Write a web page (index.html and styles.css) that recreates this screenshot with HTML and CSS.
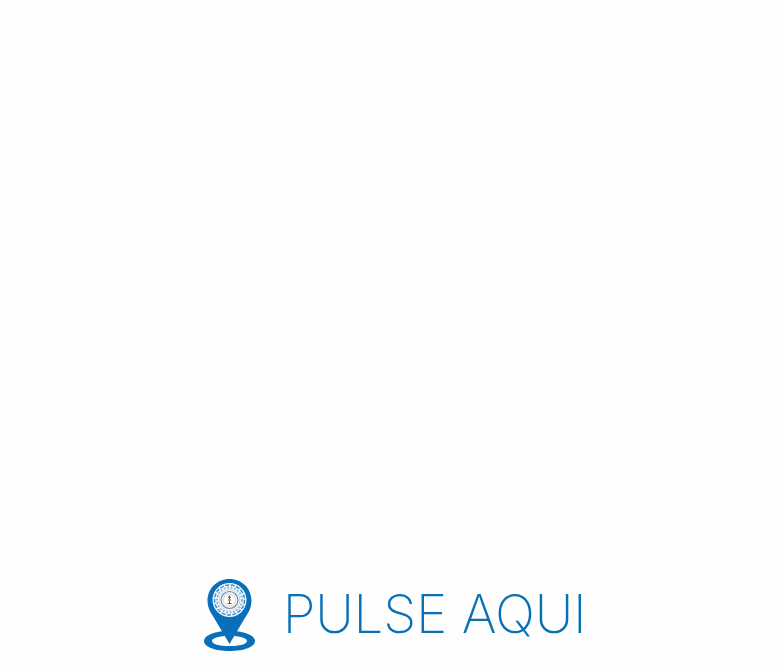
FILE: index.html
```html
<!DOCTYPE html>
<html lang="es">
<head>
<meta charset="utf-8">
<title>Pulse aquí</title>
<link rel="stylesheet" href="styles.css">
</head>
<body>
<main class="page">
  <a class="cta" href="#">
    <svg class="pin" viewBox="0 0 52 73" width="52" height="73" aria-hidden="true">
      <path class="blue" fill-rule="evenodd" d="M19 53C8 54.500 0 58 0 63c0 6 11 10 25.500 10S51 69 51 63c0-5-8-8.500-19-10l-2 5c8 .8 13 2.500 13 5 0 3-7 5-17.500 5S8 66 8 63c0-2.500 5-4.200 13-5z"/>
      <path class="blue" d="M25.500 1C13 1 3.500 10.500 3.500 23c0 6 2.500 11 6 16l16 27 16-27c3.500-5 6-10 6-16C47.500 10.500 38 1 25.500 1z"/>
      <circle class="white" cx="25.500" cy="22" r="17"/>
      <circle class="scallop" cx="25.500" cy="22" r="15"/>
      <circle class="lace" cx="25.500" cy="22" r="12.500"/>
      <circle class="lace2" cx="25.500" cy="22" r="10.500"/>
      <circle class="ring" cx="25.500" cy="22" r="8.500"/>
      <circle class="core" cx="25.500" cy="22" r="6"/>
      <path class="blue" d="M25.500 17l1.500 3h-1v5h1.500v1h-4v-1h1.500v-5h-1z"/>
      <path class="amber" d="M24 21h3v2h-3z"/>
    </svg>
    <span class="label">PULSE AQUI</span>
  </a>
</main>
</body>
</html>
```
FILE: styles.css
```css
* { box-sizing: border-box; }
html, body { margin: 0; height: 100%; background: #fefefe; }
.page {
  height: 667px;
  display: flex;
  align-items: flex-end;
  justify-content: center;
  padding: 0 0 16px 6px;
}
.cta {
  display: flex;
  align-items: center;
  gap: 27px;
  text-decoration: none;
  color: #0a70b5;
}
.pin { display: block; flex: none; }
.blue { fill: #0a6fba; }
.white { fill: #f7fafc; }
.scallop { fill: none; stroke: #3f8cc6; stroke-width: 1.500; stroke-dasharray: 4 1.500; }
.lace { fill: none; stroke: #8db9da; stroke-width: 2; stroke-dasharray: 2 1.500; }
.lace2 { fill: none; stroke: #c5dbea; stroke-width: 1; }
.ring { fill: #eef0f2; stroke: #6f8fa8; stroke-width: 1.200; }
.core { fill: #fff; stroke: #c9d5df; stroke-width: .8; }
.amber { fill: #d99a3a; }
.label {
  font-family: Inter, "Liberation Sans", sans-serif;
  font-weight: 250;
  font-size: 53px;
  line-height: 73px;
  letter-spacing: -.2px;
  white-space: nowrap;
}
```
